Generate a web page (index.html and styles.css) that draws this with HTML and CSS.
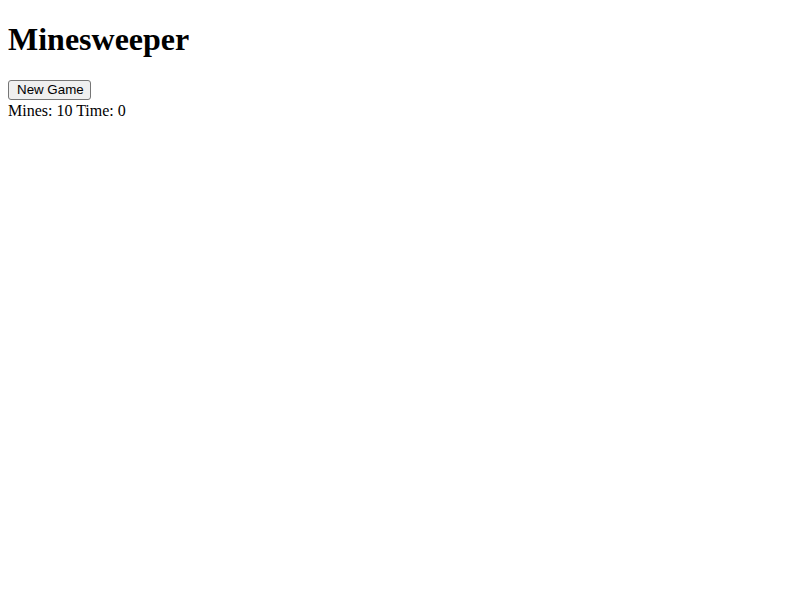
FILE: index.html
```html
<!DOCTYPE html>
<html>
<head>
<meta charset="utf-8">
<title>Minesweeper</title>
<link rel="stylesheet" href="styles.css">
</head>
<body class="page">
<h1 class="title">Minesweeper</h1>
<button class="new-game" type="button">New Game</button>
<div class="status">Mines: 10 Time: 0</div>
<div class="board"></div>
</body>
</html>
```
FILE: styles.css
```css
html, body {
  background: #ffffff;
}
.page {
  margin: 0 8px 8px;
  padding: 0;
  font-family: "Liberation Serif", "Times New Roman", serif;
  font-size: 16px;
  color: #000000;
}
.title {
  font-family: "Liberation Serif", "Times New Roman", serif;
  font-size: 32px;
  font-weight: bold;
  margin: 21.44px 0;
  line-height: 37px;
}
.new-game {
  display: block;
  box-sizing: border-box;
  height: 20px;
  font-family: "Liberation Sans", Arial, sans-serif;
  font-size: 13.333px;
  color: #000000;
  background: #efefef;
  border: 1px solid #767676;
  border-radius: 3px;
  padding: 0 6px 0 8px;
  margin: 0;
  line-height: 18px;
}
.status {
  line-height: 18px;
  padding-top: 2px;
}
```
